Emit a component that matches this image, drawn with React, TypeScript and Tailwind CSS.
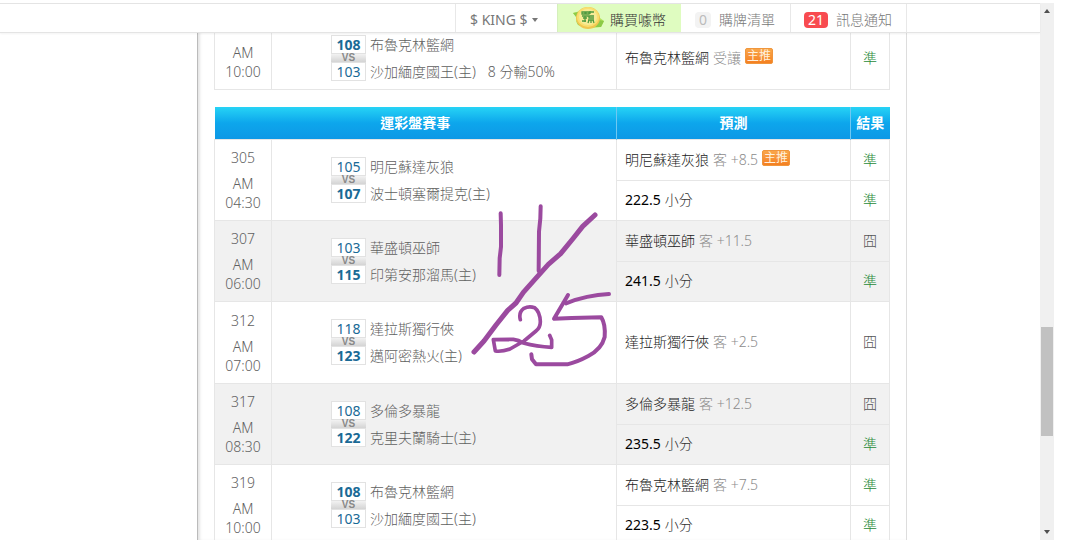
import React from 'react';

type Pick = {
  label: string;
  note?: string;
  isTotal?: boolean;
  isMain?: boolean;
  hit: boolean;
};

type Game = {
  id: string;
  time: string;
  away: string;
  home: string;
  awayScore: number;
  homeScore: number;
  extra?: string;
  picks: Pick[];
};

const PREVIOUS: Game = {
  id: '',
  time: '10:00',
  away: '布魯克林籃網',
  home: '沙加緬度國王(主)',
  awayScore: 108,
  homeScore: 103,
  extra: '8 分輸50%',
  picks: [{ label: '布魯克林籃網', note: '受讓', isMain: true, hit: true }],
};

const GAMES: Game[] = [
  {
    id: '305', time: '04:30', away: '明尼蘇達灰狼', home: '波士頓塞爾提克(主)', awayScore: 105, homeScore: 107,
    picks: [
      { label: '明尼蘇達灰狼', note: '客 +8.5', isMain: true, hit: true },
      { label: '222.5', isTotal: true, hit: true },
    ],
  },
  {
    id: '307', time: '06:00', away: '華盛頓巫師', home: '印第安那溜馬(主)', awayScore: 103, homeScore: 115,
    picks: [
      { label: '華盛頓巫師', note: '客 +11.5', hit: false },
      { label: '241.5', isTotal: true, hit: true },
    ],
  },
  {
    id: '312', time: '07:00', away: '達拉斯獨行俠', home: '邁阿密熱火(主)', awayScore: 118, homeScore: 123,
    picks: [{ label: '達拉斯獨行俠', note: '客 +2.5', hit: false }],
  },
  {
    id: '317', time: '08:30', away: '多倫多暴龍', home: '克里夫蘭騎士(主)', awayScore: 108, homeScore: 122,
    picks: [
      { label: '多倫多暴龍', note: '客 +12.5', hit: false },
      { label: '235.5', isTotal: true, hit: true },
    ],
  },
  {
    id: '319', time: '10:00', away: '布魯克林籃網', home: '沙加緬度國王(主)', awayScore: 108, homeScore: 103,
    picks: [
      { label: '布魯克林籃網', note: '客 +7.5', hit: true },
      { label: '223.5', isTotal: true, hit: true },
    ],
  },
];

const CoinLogo: React.FC = () => (
  <svg viewBox="0 0 32 24" className="h-6 w-8 shrink-0" aria-hidden="true">
    <path d="M1 7 L8 5 L13 3 L24 6 L28 12 L32 15 L29 21 L20 22 L8 20 L4 15 L5 11 Z" fill="#b4e45c" />
    <path d="M1 7 L7 6 L4 11 Z M27 14 L32 15 L29 21 L23 21 Z M4 15 L9 20 L6 19 Z" fill="#8ccb48" />
    <ellipse cx="16" cy="12" rx="12" ry="11" fill="#f0c650" />
    <ellipse cx="16" cy="11" rx="11" ry="10" fill="#f9df70" />
    <ellipse cx="16" cy="11" rx="9" ry="8" fill="#f7eb96" />
    <path
      d="M10 6h3v2h-3zM14 6h3v2h-3zM18 5v3M18 6h4M10 10h12M11 12h4M13 10v6M17 10v2h5M10 15h4M16 14h6M17 14l-1 3M19 14v3M21 14l1 3"
      fill="none" stroke="#4f9a3f" strokeWidth="1.3"
    />
  </svg>
);

const TopBar: React.FC = () => (
  <nav className="relative z-10 flex h-[30px] shrink-0 justify-end border-y border-[#e4e4e4] bg-white pr-[133px] text-sm text-[#777] shadow-xs">
    <button type="button" className="flex w-[102px] items-center gap-1 border-l border-[#e8e8e8] pl-[14px] pt-1 font-normal">
      $ KING $
      <span className="h-0 w-0 border-x-[3px] border-t-[4px] border-x-transparent border-t-[#777]" />
    </button>
    <a href="#coins" className="flex w-[124px] items-center gap-[6px] border-l border-[#d5efbc] bg-[#dffcc0] pl-[14px] text-[#333]">
      <CoinLogo />
      <span className="pt-1">購買噱幣</span>
    </a>
    <a href="#cart" className="flex w-[109px] items-center gap-2 pl-[14px] pt-1">
      <span className="rounded-sm bg-[#f3f3f3] px-1 leading-4 font-normal text-[#bbb]">0</span>
      購牌清單
    </a>
    <a href="#messages" className="flex w-[117px] items-center gap-2 border-x border-[#e8e8e8] pl-[13px] pt-1">
      <span className="rounded-sm bg-[#f84b50] px-1 leading-4 font-normal text-white">21</span>
      訊息通知
    </a>
  </nav>
);

const Score: React.FC<{ value: number; win: boolean }> = ({ value, win }) => (
  <div className={`h-[19px] border border-[#e2e2e2] bg-white text-center leading-[18px] text-[#1a6a96] ${win ? 'font-bold' : 'font-normal'}`}>
    {value}
  </div>
);

const Match: React.FC<{ game: Game }> = ({ game }) => (
  <div className="flex items-center gap-1 pl-[59px]">
    <div className="w-[35px]">
      <Score value={game.awayScore} win={game.awayScore > game.homeScore} />
      <div className="h-2 bg-linear-to-b from-[#f2f2f2] to-[#d4d4d4] text-center font-['Liberation_Sans'] text-[10px] font-bold leading-2 text-[#888]">VS</div>
      <Score value={game.homeScore} win={game.homeScore > game.awayScore} />
    </div>
    <div className="leading-[27px]">
      <div>{game.away}</div>
      <div className="flex gap-3">
        <span>{game.home}</span>
        {game.extra && <span>{game.extra}</span>}
      </div>
    </div>
  </div>
);

const PickLabel: React.FC<{ pick: Pick }> = ({ pick }) => (
  <div className="flex items-center gap-1 pl-2">
    <span className={pick.isTotal ? 'text-black font-normal' : 'text-[#222]'}>{pick.label}</span>
    {pick.isTotal && <span className="text-[#333]">小分</span>}
    {pick.note && <span className="text-[#8c8c8c]">{pick.note}</span>}
    {pick.isMain && (
      <span className="mb-1 h-4 w-7 rounded-xs border border-[#f0963c] bg-linear-to-b from-[#f9a64a] to-[#f47f20] text-center text-xs leading-[14px] font-normal text-[#fff0dc]">
        主推
      </span>
    )}
  </div>
);

const rowHeight = (game: Game, i: number) => {
  if (!game.id) return 'h-16';
  // a single pick fills the height of two
  if (game.picks.length === 1) return 'h-[82px]';
  return i === 0 ? 'h-[41px]' : 'h-10';
};

const GameRows: React.FC<{ game: Game; shaded?: boolean }> = ({ game, shaded }) => {
  const cell = 'border border-[#e6e6e6] p-0';

  return (
    <>
      {game.picks.map((pick, i) => (
        <tr key={pick.label} className={`${rowHeight(game, i)} ${shaded ? 'bg-[#f1f1f1]' : ''}`}>
          {i === 0 && (
            <>
              <td rowSpan={game.picks.length} className={`${cell} text-center align-bottom leading-[19px]`}>
                {game.id && <div className="mb-[7px]">{game.id}</div>}
                <div>AM</div>
                <div className="pb-2">{game.time}</div>
              </td>
              <td rowSpan={game.picks.length} className={cell}>
                <Match game={game} />
              </td>
            </>
          )}
          <td className={cell}>
            <PickLabel pick={pick} />
          </td>
          <td className={`${cell} text-center ${pick.hit ? 'text-[#1f8a38]' : 'text-[#555]'}`}>{pick.hit ? '準' : '囧'}</td>
        </tr>
      ))}
    </>
  );
};

const Columns: React.FC = () => (
  <colgroup>
    <col className="w-[57px]" />
    <col />
    <col className="w-[234px]" />
    <col className="w-[39px]" />
  </colgroup>
);

const HandwrittenDate: React.FC = () => (
  <svg
    viewBox="0 0 480 540"
    className="pointer-events-none absolute left-[246px] top-[88px] h-[180px] w-[160px]"
    fill="none" stroke="#9b4a9f" strokeWidth="12" strokeLinecap="round" strokeLinejoin="round"
    aria-hidden="true"
  >
    <path d="M122 55 L123 90 L123 155 L119 190 L118 240" />
    <path d="M242 34 L241 70 L237 110 L236 228" />
    <path d="M405 60 L368 94 L338 132 L302 176 L265 208 L222 256 L190 292 L168 324 L143 346 L108 390 L72 438 L42 471" strokeWidth="15" />
    <path d="M181 374 Q175 352 192 340 Q207 332 224 338 Q240 350 241 380 Q241 398 228 408 L192 438 L150 462 Q125 471 106 468 L100 434 L160 433 Q176 435 190 444 Q230 455 275 457 L275 435 L269 421" strokeWidth="11" />
    <path d="M324 300 L282 371 L335 369 L424 367 Q437 388 434 426 Q425 462 385 483 Q352 501 322 508 L228 508 L216 493 L214 478" />
    <path d="M318 325 Q380 300 447 297" />
  </svg>
);

const Scrollbar: React.FC = () => (
  <div className="flex w-[14px] shrink-0 flex-col items-center bg-[#f0f0f0]">
    <button type="button" aria-label="Scroll up" className="flex h-4 w-full items-center justify-center">
      <span className="h-0 w-0 border-x-[3px] border-b-[4px] border-x-transparent border-b-[#505050]" />
    </button>
    <div className="flex-[308]" />
    <div className="h-[109px] w-3 bg-[#c1c1c1]" />
    <div className="flex-[88]" />
    <button type="button" aria-label="Scroll down" className="flex h-4 w-full items-center justify-center">
      <span className="h-0 w-0 border-x-[3px] border-t-[4px] border-x-transparent border-t-[#505050]" />
    </button>
  </div>
);

const App: React.FC = () => {
  return (
    <div className="flex h-screen overflow-hidden bg-white pr-[26px] pt-[3px] font-['Noto_Sans','Noto_Sans_CJK_TC',sans-serif] text-sm font-light text-[#606060]" lang="zh-Hant">
      <div className="flex min-w-0 flex-1 flex-col">
        <TopBar />
        <main className="ml-[197px] mr-[133px] min-h-0 flex-1 border-x border-l-[#bbb] border-r-[#ddd] px-4 shadow-[inset_3px_0_3px_-1px_#e4e4e4]">
          {/* scrolled partly under the top bar */}
          <table className="-mt-2 w-full table-fixed border-collapse">
            <Columns />
            <tbody>
              <GameRows game={PREVIOUS} />
            </tbody>
          </table>

          <div className="relative mt-[17px]">
            <table className="w-full table-fixed border-collapse">
              <Columns />
              <thead>
                <tr className="h-8 bg-linear-to-b from-[#27d3f5] via-[#0da6ec] to-[#0d98e6] text-white">
                  <th colSpan={2} className="border-r border-[#6fc8f2] p-0 pt-px">運彩盤賽事</th>
                  <th className="border-r border-[#6fc8f2] p-0 pt-px">預測</th>
                  <th className="p-0 pt-px">結果</th>
                </tr>
              </thead>
              <tbody>
                {GAMES.map((game, idx) => (
                  <GameRows key={game.id} game={game} shaded={idx % 2 === 1} />
                ))}
              </tbody>
            </table>
            <HandwrittenDate />
          </div>
        </main>
      </div>
      <Scrollbar />
    </div>
  );
};

export default App;
